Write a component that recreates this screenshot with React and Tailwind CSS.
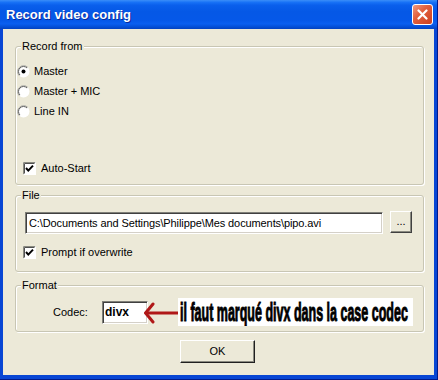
import React from "react";

function Radio({ checked }) {
  return (
    <svg width="13" height="13" viewBox="0 0 13 13" className="shrink-0">
      <circle cx="6.5" cy="6.5" r="6" fill="#ffffff" />
      <path d="M2.26 10.74 A6 6 0 0 1 10.74 2.26" stroke="#a8a8a0" strokeWidth="1" fill="none" />
      <path d="M2.96 10.04 A5 5 0 0 1 10.04 2.96" stroke="#606060" strokeWidth="1" fill="none" />
      {checked && <circle cx="6.5" cy="6.5" r="2" fill="#000000" />}
    </svg>
  );
}

function Check({ checked }) {
  return (
    <svg width="13" height="13" viewBox="0 0 13 13" className="shrink-0">
      <rect x="0" y="0" width="13" height="13" fill="#ffffff" />
      <path d="M0.5 12.5 V0.5 H12.5" stroke="#8a8a80" strokeWidth="1" fill="none" />
      <path d="M1.5 11.5 V1.5 H11.5" stroke="#505050" strokeWidth="1" fill="none" />
      <path d="M0.5 12.5 H12.5 V0.5" stroke="#ffffff" strokeWidth="1" fill="none" />
      {checked && (
        <path d="M3 6 L5.3 8.6 L10 3.6" stroke="#000000" strokeWidth="2" fill="none" />
      )}
    </svg>
  );
}

function Group({ label, className, children }) {
  return (
    <div
      className={
        "relative w-[409px] border border-[#c8c6b4] rounded-[3px] shadow-[inset_1px_1px_0_#ffffff,1px_1px_0_#ffffff] " +
        className
      }
    >
      <span className="absolute -top-[7px] left-[5px] px-[1px] bg-[#ece9d8] leading-[13px] text-black">
        {label}
      </span>
      {children}
    </div>
  );
}

export default function App() {
  return (
    <div
      className="w-[438px] h-[380px] flex flex-col bg-[#0846d4] border-r border-b border-r-[#001a8c] border-b-[#001a8c] overflow-hidden text-[11px] text-black"
      style={{ fontFamily: '"Liberation Sans", Arial, sans-serif' }}
    >
      <div className="h-[29px] shrink-0 flex items-center justify-between pl-[6px] pr-[4px] bg-[linear-gradient(to_bottom,#3b8ef8_0%,#1872f6_8%,#0a5fec_18%,#0558e6_40%,#0558e8_70%,#0a5ff0_82%,#0450d8_92%,#0342c0_100%)]">
        <span className="text-white font-bold text-[13px] leading-[16px] pt-[1px] [text-shadow:1px_1px_0_#0a2a9a]">
          Record video config
        </span>
        <div className="w-[21px] h-[21px] rounded-[3px] border border-white bg-[linear-gradient(135deg,#f09a80_0%,#e2603e_40%,#cc4020_100%)] flex items-center justify-center">
          <svg width="11" height="11" viewBox="0 0 11 11">
            <path d="M1.5 1.5 L9.5 9.5 M9.5 1.5 L1.5 9.5" stroke="#ffffff" strokeWidth="2.2" strokeLinecap="round" />
          </svg>
        </div>
      </div>

      <div className="flex-1 ml-[3px] mr-[3px] mb-[4px] bg-[#ece9d8] pt-[17px] pl-[12px] flex flex-col">
        <Group label="Record from" className="h-[139px] flex flex-col">
          <div className="pt-[16px] pl-[1px] flex flex-col gap-[4px]">
            <div className="h-[16px] flex items-center gap-[4px]">
              <Radio checked />
              <span>Master</span>
            </div>
            <div className="h-[16px] flex items-center gap-[4px]">
              <Radio />
              <span>Master + MIC</span>
            </div>
            <div className="h-[16px] flex items-center gap-[4px]">
              <Radio />
              <span>Line IN</span>
            </div>
          </div>
          <div className="mt-[43px] ml-[7px] h-[13px] flex items-center gap-[5px]">
            <Check checked />
            <span>Auto-Start</span>
          </div>
        </Group>

        <Group label="File" className="mt-[10px] h-[77px] flex flex-col">
          <div className="pt-[16px] pl-[9px] flex items-start">
            <div className="w-[358px] h-[22px] bg-white border border-t-[#7f7f78] border-l-[#7f7f78] border-r-white border-b-white shadow-[inset_1px_1px_0_#404040,inset_-1px_-1px_0_#d4d0c8] flex items-center pl-[3px] whitespace-nowrap overflow-hidden tracking-[-0.1px]">
              C:\Documents and Settings\Philippe\Mes documents\pipo.avi
            </div>
            <div className="ml-[7px] -mt-[1px] w-[22px] h-[22px] border border-t-white border-l-white border-r-[#404040] border-b-[#404040] shadow-[inset_-1px_-1px_0_#8a8a80] flex items-center justify-center leading-none pb-[2px]">
              ...
            </div>
          </div>
          <div className="mt-[12px] ml-[7px] h-[13px] flex items-center gap-[5px]">
            <Check checked />
            <span>Prompt if overwrite</span>
          </div>
        </Group>

        <Group label="Format" className="mt-[13px] h-[47px]">
          <div className="pt-[12px] pl-[37px] flex items-center h-[40px]">
            <span className="w-[49px]">Codec:</span>
            <div className="w-[46px] h-[23px] bg-white border border-t-[#7f7f78] border-l-[#7f7f78] border-r-white border-b-white shadow-[inset_1px_1px_0_#404040,inset_-1px_-1px_0_#d4d0c8] flex items-center pl-[2px] font-bold text-[12px]">
              divx
            </div>
            <svg width="34" height="24" viewBox="0 0 34 24" className="-ml-[4px] shrink-0">
              <path d="M3 13 H34" stroke="#b01818" strokeWidth="3" />
              <path d="M9 4 Q5 9 1.5 13 Q5 17 9 22" stroke="#b01818" strokeWidth="3" fill="none" strokeLinecap="round" />
            </svg>
            <div className="w-[235px] h-[28px] bg-white overflow-hidden whitespace-nowrap">
              <span className="inline-block origin-left scale-x-[0.5] text-[25px] leading-[28px] font-bold pl-[4px] [-webkit-text-stroke:1px_black]">
                il faut marqué divx dans la case codec
              </span>
            </div>
          </div>
        </Group>

        <div className="mt-[8px] ml-[165px] w-[75px] h-[23px] border border-t-white border-l-white border-r-[#202020] border-b-[#202020] shadow-[inset_-1px_-1px_0_#8a8a80] flex items-center justify-center">
          OK
        </div>
      </div>
    </div>
  );
}
